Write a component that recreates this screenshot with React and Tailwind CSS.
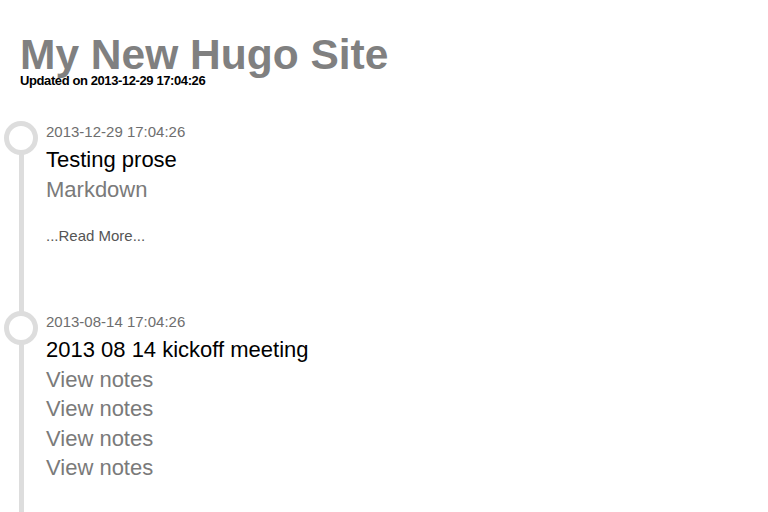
// Hugo site index: header plus a vertical timeline of posts.

const posts = [
  {
    date: '2013-12-29 17:04:26',
    title: 'Testing prose',
    links: ['Markdown'],
    readMore: true,
  },
  {
    date: '2013-08-14 17:04:26',
    title: '2013 08 14 kickoff meeting',
    links: ['View notes', 'View notes', 'View notes', 'View notes'],
    readMore: false,
  },
];

function Post({ post, first }) {
  return (
    <div className={`relative pl-[46px] ${first ? '' : 'mt-[63px]'}`}>
      <span className="absolute left-[4px] top-[2px] w-[34px] h-[34px] rounded-full border-[5px] border-[#dddddd] bg-white" />
      <div className="text-[15px] leading-[26px] text-[#6e6e6e]">{post.date}</div>
      <div className="text-[22px] leading-[29.5px] text-black">{post.title}</div>
      {post.links.map((l, i) => (
        <div key={i} className="text-[22px] leading-[29.5px] text-[#7a7a7a]">{l}</div>
      ))}
      {post.readMore && (
        <div className="mt-[22px] text-[15px] leading-[20px] text-[#555555]">...Read More...</div>
      )}
    </div>
  );
}

export default function App() {
  return (
    <div className="h-[512px] overflow-hidden bg-white flex flex-col font-['Liberation_Sans',Arial,sans-serif]">
      <header className="pt-[35px] pl-[20px]">
        <h1 className="text-[42.5px] leading-[40px] font-bold text-[#808080]">My New Hugo Site</h1>
        <div className="text-[13px] leading-[12px] font-bold tracking-[-0.4px] text-black">Updated on 2013-12-29 17:04:26</div>
      </header>
      <div className="relative flex-1 mt-[32px]">
        <span className="absolute left-[19px] top-[18px] bottom-0 w-[5px] bg-[#dddddd]" />
        {posts.map((p, i) => (
          <Post key={i} post={p} first={i === 0} />
        ))}
      </div>
    </div>
  );
}
